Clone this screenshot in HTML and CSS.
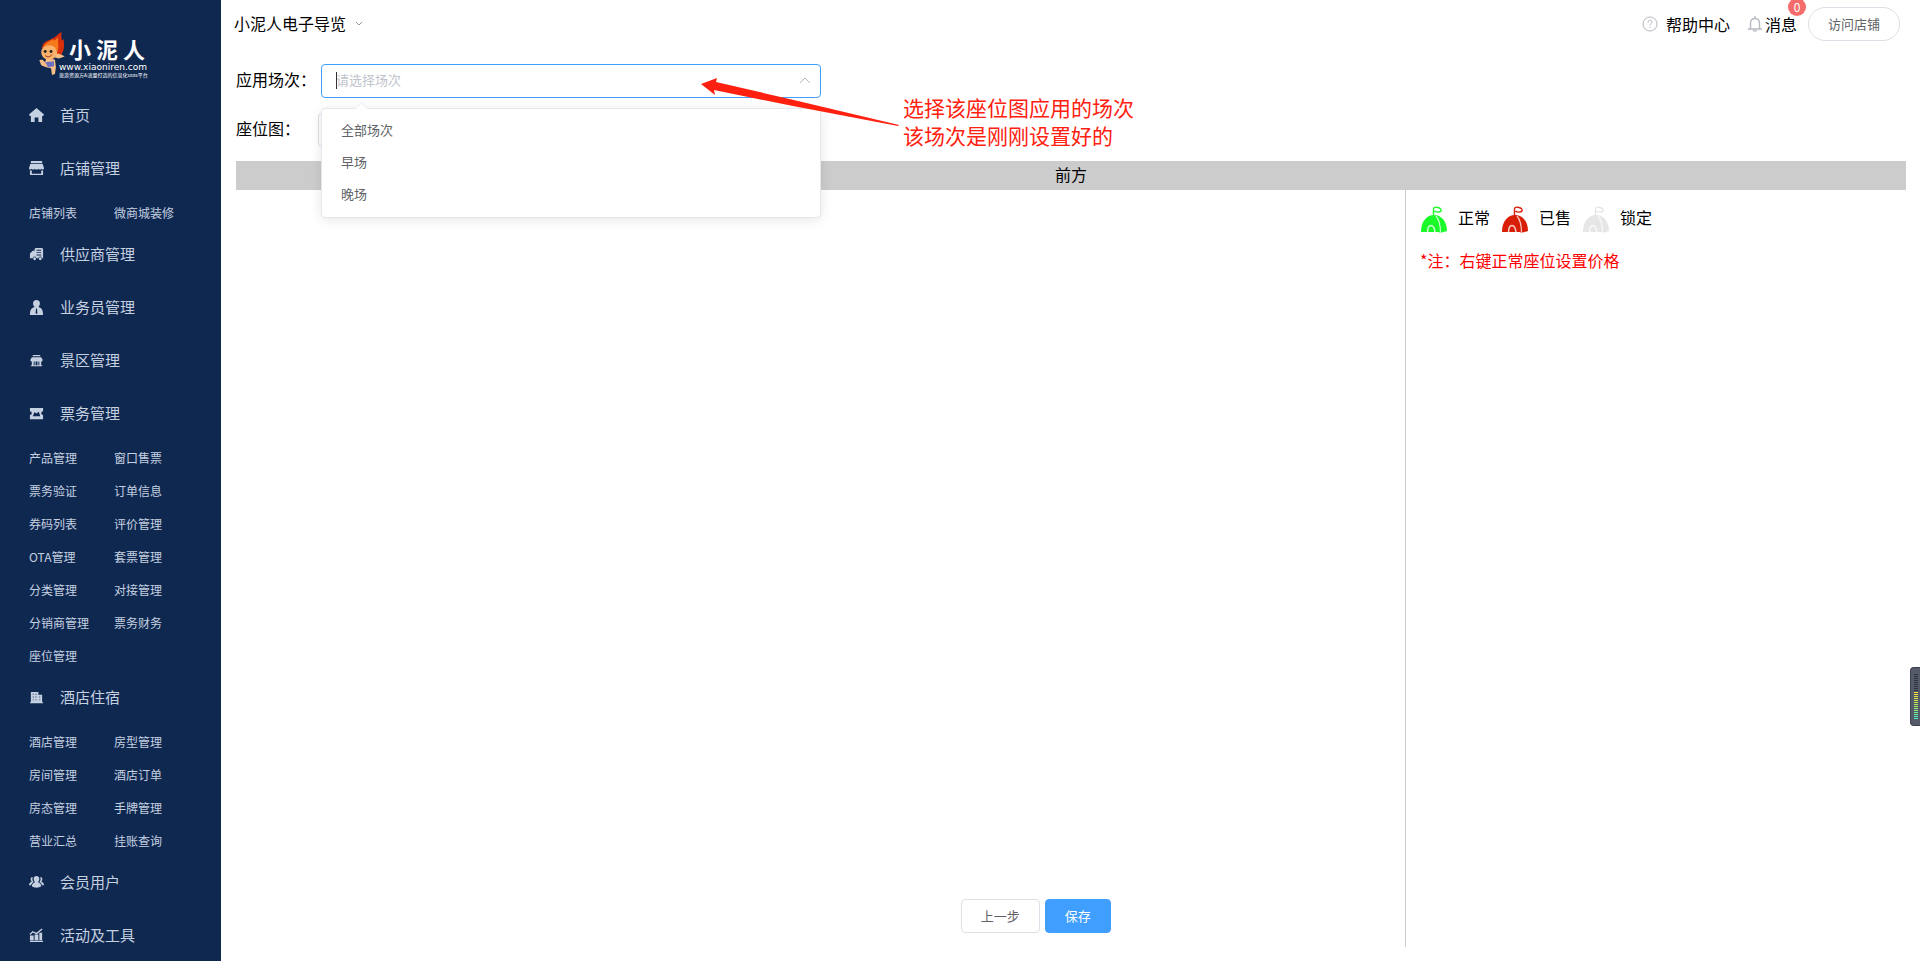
FILE: index.html
```html
<!DOCTYPE html>
<html lang="zh-CN">
<head>
    <meta charset="UTF-8">
    <meta name="viewport" content="width=device-width, initial-scale=1.0">
    <title>小泥人电子导览</title>
    <link rel="stylesheet" href="styles.css">
</head>
<body>
<svg class="defs" width="0" height="0">
    <symbol id="tent" viewBox="0 0 28 28">
        <path d="M1 26C1 15 7 9 14 9c7 0 13 6 13 16l-7 2-1-1z" fill="currentColor"/>
        <path d="M13.500 10V3.500C13 1 16 .8 18 1.500c2 .5 4 2 3 3.500-1 1.500-5 1.500-6.500 0" fill="none" stroke="currentColor" stroke-width="1.400"/>
        <path d="M16 10c3.500 4 4.500 10 4.500 17" fill="none" stroke="#fff" stroke-opacity=".75" stroke-width="1.200"/>
        <path d="M7.500 26.500c0-5 1.500-7 3.500-7s3.500 2 4 7" fill="none" stroke="#fff" stroke-opacity=".8" stroke-width="1.500"/>
    </symbol>
</svg>
<div class="layout">
    <aside class="sidebar">
        <a class="logo" href="#">
            <svg class="mascot" viewBox="0 0 28 45">
                <path d="M4 18C3 10 10 9 14 7c4-2 6-5 10-7-1 4 0 6 0 9 1-1 2-1 2-2 0 5 2 12-4 18z" fill="#d8300c"/>
                <path d="M5 18c0-7 6-7 10-11 0 3 2 2 5-2 0 8 2 12-2 18z" fill="#f47a1c"/>
                <ellipse cx="11" cy="21" rx="8" ry="7.500" fill="#f9b26c"/>
                <path d="M18 22c4 0 7 2 9 3l-6 2-4-1zM8 27l9 1 1 8-1 7-3 1-1-7-5-1-5-2-2-5 3-1 3 3z" fill="#f6bd85"/>
                <path d="M7 31l9-1v5l-6 1z" fill="#6d6fc4"/>
                <circle cx="7" cy="20" r="1.500" fill="#222"/>
                <circle cx="13" cy="20" r="1.500" fill="#222"/>
                <path d="M7 24c2 2 5 2 7-1" fill="none" stroke="#8c2c10"/>
            </svg>
            <span class="logo-text">
                <strong>小泥人</strong>
                <span class="logo-url">www.xiaoniren.com</span>
                <span class="logo-slogan">旅游资源方&amp;流量打造的信息化saas平台</span>
            </span>
        </a>
        <nav>
            <a class="menu-item" href="#">
                <svg viewBox="0 0 16 16"><path d="M8 0l8 7-1 1.500h-1V15h-4v-5H6v5H2V8.500H1L0 7z"/></svg>首页
            </a>
            <a class="menu-item" href="#">
                <svg viewBox="0 0 16 16"><path d="M2 0h12v2H2zM1.500 3h13L16 7.500c0 2-2 2-2.700.7C12.500 9.500 11 9.500 10.300 8.200 9.500 9.500 6.500 9.500 5.700 8.200 5 9.500 3.500 9.500 2.700 8.200 2 9.500 0 9.500 0 7.500zM1 10h2v3.500h10V10h2v5H1z"/></svg>店铺管理
            </a>
            <div class="submenu">
                <a href="#">店铺列表</a><a href="#">微商城装修</a>
            </div>
            <a class="menu-item" href="#">
                <svg viewBox="0 0 16 16"><path fill-rule="evenodd" d="M7 1h7l1 1v10h-1a2 2 0 0 0-4 0H8a2 2 0 0 0-4 0H1V7l3-3h2V2zM8 3v1h5V3zm0 2.500v1h5v-1zM8 8v1h5V8z"/><circle cx="6" cy="12.500" r="1.500"/><circle cx="12" cy="12.500" r="1.500"/></svg>供应商管理
            </a>
            <a class="menu-item" href="#">
                <svg viewBox="0 0 16 16"><path fill-rule="evenodd" d="M8 0c5 0 4 6 2 7.500 4 1 5 4 5 8.500H1c0-4.500 1-7.500 5-8.500C4 6 3 0 8 0zm-.500 9L7 14l1 1 1-1-.500-5z"/></svg>业务员管理
            </a>
            <a class="menu-item" href="#">
                <svg viewBox="0 0 16 16"><path d="M4 2h8v1.500H4zM3 4.500h10L15 8h-1v1H2V8H1zM3 9h2v4h1V9h1v4h2V9h1v4h1V9h2v4h1v1H2v-1h1z"/></svg>景区管理
            </a>
            <a class="menu-item" href="#">
                <svg viewBox="0 0 16 16"><path fill-rule="evenodd" d="M1 2h14v3.500a2 2 0 0 0 0 4V14H1V9.500a2 2 0 0 0 0-4zM4 11h8L10.500 6 8 8 6 6.500z"/></svg>票务管理
            </a>
            <div class="submenu">
                <a href="#">产品管理</a><a href="#">窗口售票</a>
                <a href="#">票务验证</a><a href="#">订单信息</a>
                <a href="#">券码列表</a><a href="#">评价管理</a>
                <a href="#">OTA管理</a><a href="#">套票管理</a>
                <a href="#">分类管理</a><a href="#">对接管理</a>
                <a href="#">分销商管理</a><a href="#">票务财务</a>
                <a href="#">座位管理</a>
            </div>
            <a class="menu-item" href="#">
                <svg viewBox="0 0 16 16"><path fill-rule="evenodd" d="M2 2h8v3h4v8h1v1H1v-1h1zm2 2v1h1V4zm3 0v1h1V4zM4 7v1h1V7zm3 0v1h1V7zm-3 3v1h1v-1zm3 0v1h1v-1zm4-3v1h1V7zm0 3v1h1v-1z"/></svg>酒店住宿
            </a>
            <div class="submenu">
                <a href="#">酒店管理</a><a href="#">房型管理</a>
                <a href="#">房间管理</a><a href="#">酒店订单</a>
                <a href="#">房态管理</a><a href="#">手牌管理</a>
                <a href="#">营业汇总</a><a href="#">挂账查询</a>
            </div>
            <a class="menu-item" href="#">
                <svg viewBox="0 0 16 16"><path d="M8 1c4 0 3.500 5 1.500 6.500C12 9 13 10 13 12c-2 2-8 2-10 0 0-2 1-3 3.500-4.500C4.500 6 4 1 8 1zM4 2C3 4 4 6.500 5 7.500 3 8.500 2.500 10 2 11H0c0-2 1-3 3-4C1 5 1.500 2 4 2zm8 0c1 2 0 4.500-1 5.500 2 1 2.500 2.500 3 3.500h2c0-2-1-3-3-4 2-2 1.500-5-1-5z"/></svg>会员用户
            </a>
            <a class="menu-item" href="#">
                <svg viewBox="0 0 16 16"><path d="M1 8h4v5H1zm5-1h4v6H6zm5-2h3v8h-3zM1 13.500h14V15H1z"/><path d="M1 7l3-3 4 2 6-5" fill="none" stroke="currentColor" stroke-width="1.400"/></svg>活动及工具
            </a>
        </nav>
    </aside>

    <div class="content">
        <header class="topbar">
            <button class="shop-switch" type="button">小泥人电子导览
                <svg width="8" height="8" viewBox="0 0 8 8"><path d="M1 3l3 3 3-3"/></svg>
            </button>
            <div class="top-links">
                <a class="help" href="#">
                    <svg width="16" height="16" viewBox="0 0 16 16"><circle cx="8" cy="8" r="7"/><path d="M6 6.500c0-3 4-3 4-.5 0 1.500-2 1.500-2 3.500M8 11v1"/></svg>
                    帮助中心
                </a>
                <a class="news" href="#">
                    <svg width="14" height="16" viewBox="0 0 14 16"><path d="M0 13h14M2.500 13V7c0-6 9-6 9 0v6M7 2.500V0M5.500 14c0 1.500 3 1.500 3 0" stroke-width="1.400"/></svg>
                    消息
                    <span class="badge">0</span>
                </a>
                <button class="visit" type="button">访问店铺</button>
            </div>
        </header>

        <main class="main">
            <div class="form-row">
                <label for="session">应用场次：</label>
                <div class="select">
                    <input id="session" type="text" placeholder="请选择场次" autocomplete="off">
                    <span class="caret"></span>
                    <svg class="arrow-up" width="12" height="8" viewBox="0 0 12 8"><path d="M1 7l5-5 5 5"/></svg>
                    <ul class="dropdown">
                        <li>全部场次</li>
                        <li>早场</li>
                        <li>晚场</li>
                    </ul>
                    <svg class="pointer" viewBox="0 0 200 50"><path d="M0 6l16-6-1 4 82 19 101 24-1 1L92 28 13 12l1 5z"/></svg>
                    <p class="tip">选择该座位图应用的场次<br>该场次是刚刚设置好的</p>
                </div>
            </div>
            <div class="form-row seat-row">
                <label for="seatmap">座位图：</label>
                <input id="seatmap" type="text">
            </div>
            <div class="front">前方</div>
            <div class="stage">
                <section class="seats">
                    <div class="actions">
                        <button class="btn" type="button">上一步</button>
                        <button class="btn primary" type="button">保存</button>
                    </div>
                </section>
                <section class="legend">
                    <ul class="states">
                        <li><svg class="tent normal"><use href="#tent"/></svg>正常</li>
                        <li><svg class="tent sold"><use href="#tent"/></svg>已售</li>
                        <li><svg class="tent locked"><use href="#tent"/></svg>锁定</li>
                    </ul>
                    <p class="note">*注：右键正常座位设置价格</p>
                </section>
            </div>
        </main>
    </div>
</div>
<div class="meter"><span class="meter-off"></span><span class="meter-on"></span></div>
</body>
</html>
```
FILE: styles.css
```css
* {
    box-sizing: border-box;
}
body {
    margin: 0;
    font-family: "Noto Sans CJK SC", sans-serif;
    font-size: 16px;
    line-height: 24px;
    color: #000;
    background: #fff;
}
a {
    color: inherit;
    text-decoration: none;
}
ul, p {
    margin: 0;
    padding: 0;
    list-style: none;
}
button, input {
    font-family: inherit;
}
.defs {
    position: absolute;
}
.layout {
    display: flex;
    height: 100vh;
}

/* sidebar */
.sidebar {
    flex: 0 0 221px;
    overflow: hidden;
    background: #0f2850;
    color: #c5d0e0;
}
.logo {
    display: flex;
    height: 90px;
    padding: 32px 0 0 38px;
    color: #fff;
}
.mascot {
    flex: none;
    width: 28px;
    height: 44px;
}
.logo-text {
    display: flex;
    flex-direction: column;
    margin-left: -7px;
    padding-top: 2px;
    white-space: nowrap;
}
.logo-text strong {
    padding-left: 10px;
    font-size: 22px;
    font-weight: 700;
    line-height: 28px;
    letter-spacing: 5px;
}
.logo-url {
    font-family: "DejaVu Sans", sans-serif;
    font-size: 9px;
    line-height: 10px;
}
.logo-slogan {
    font-size: 5px;
    line-height: 5px;
}
.menu-item {
    display: flex;
    align-items: center;
    height: 53px;
    padding: 0 0 3px 29px;
    font-size: 15px;
}
.menu-item svg {
    width: 15px;
    height: 15px;
    margin-right: 16px;
    fill: currentColor;
}
.submenu {
    display: grid;
    grid-template-columns: 85px 1fr;
    padding-left: 29px;
    font-size: 12px;
    line-height: 33px;
}

/* top bar */
.content {
    display: flex;
    flex: 1;
    flex-direction: column;
    min-width: 0;
}
.topbar {
    display: flex;
    justify-content: space-between;
    height: 48px;
    padding: 0 20px 0 13px;
}
.topbar svg, .arrow-up {
    fill: none;
    stroke: #b4b8c0;
}
.shop-switch {
    display: flex;
    align-items: center;
    gap: 9px;
    height: 46px;
    padding: 0;
    border: 0;
    background: none;
    color: #000;
    font-size: 16px;
}
.shop-switch svg {
    stroke: #909399;
}
.top-links {
    display: flex;
    align-items: center;
    height: 48px;
}
.help, .news {
    display: flex;
    align-items: center;
}
.help {
    gap: 8px;
    margin-right: 18px;
}
.news {
    position: relative;
    gap: 3px;
    margin-right: 11px;
}
.badge {
    position: absolute;
    top: -14px;
    right: -9px;
    width: 18px;
    height: 18px;
    border-radius: 9px;
    background: #f56c6c;
    color: #fff;
    font-size: 12px;
    line-height: 18px;
    text-align: center;
}
.visit {
    height: 34px;
    padding: 0 19px 2px;
    border: 1px solid #dcdfe6;
    border-radius: 17px;
    background: #fff;
    color: #606266;
    font-size: 13px;
}

/* form */
.main {
    display: flex;
    flex: 1;
    flex-direction: column;
    padding: 16px 14px 14px 15px;
}
.form-row {
    display: flex;
    align-items: center;
    gap: 5px;
    height: 34px;
    margin-bottom: 15px;
}
.form-row label {
    padding-bottom: 4px;
}
.seat-row {
    gap: 18px;
    margin-bottom: 14px;
}
.select {
    position: relative;
    width: 500px;
}
.form-row input {
    display: block;
    width: 500px;
    height: 34px;
    padding: 0 14px 3px;
    border: 1px solid #dcdfe6;
    border-radius: 4px;
    outline: none;
    color: #606266;
    font-size: 13px;
}
.form-row .select input {
    border-color: #409eff;
}
.form-row input::placeholder {
    color: #c0c4cc;
}
.caret {
    position: absolute;
    top: 8px;
    left: 15px;
    width: 1px;
    height: 17px;
    background: #333;
}
.arrow-up {
    position: absolute;
    top: 12px;
    right: 10px;
}
.dropdown {
    position: absolute;
    z-index: 2;
    top: 44px;
    left: 0;
    width: 100%;
    padding: 5px 0 7px;
    border: 1px solid #e4e7ed;
    border-radius: 4px;
    background: #fff;
    box-shadow: 0 2px 12px rgba(0, 0, 0, 0.1);
    color: #606266;
    font-size: 13px;
    line-height: 32px;
}
.dropdown::before {
    content: "";
    position: absolute;
    top: -5px;
    left: 35px;
    width: 8px;
    height: 8px;
    border: 1px solid #ebeef5;
    border-width: 1px 0 0 1px;
    background: #fff;
    transform: rotate(45deg);
}
.dropdown li {
    padding: 0 19px;
}
.pointer {
    position: absolute;
    z-index: 3;
    top: 14px;
    left: 380px;
    width: 200px;
    height: 50px;
    fill: #ff2010;
}
.tip {
    position: absolute;
    z-index: 3;
    top: 29px;
    left: 582px;
    color: #ff2010;
    font-size: 21px;
    line-height: 28px;
    white-space: nowrap;
}

/* seat area */
.front {
    height: 29px;
    background: #ccc;
    line-height: 26px;
    text-align: center;
}
.stage {
    display: flex;
    flex: 1;
}
.seats {
    display: flex;
    width: 70%;
    align-items: flex-end;
}
.actions {
    display: flex;
    gap: 5px;
    margin: 0 0 14px 62%;
}
.btn {
    height: 34px;
    padding: 0 19px 2px;
    border: 1px solid #dcdfe6;
    border-radius: 4px;
    background: #fff;
    color: #606266;
    font-size: 13px;
}
.primary {
    border-color: #409eff;
    background: #409eff;
    color: #fff;
}
.legend {
    width: 30%;
    padding: 15px 14px;
    border-left: 1px solid #ccc;
}
.states {
    display: flex;
    gap: 11px;
    height: 30px;
}
.states li {
    display: flex;
    align-items: flex-start;
}
.tent {
    width: 28px;
    height: 28px;
    margin: 1px 10px 0 0;
}
.normal {
    color: #1afa29;
}
.sold {
    color: #d81e06;
}
.locked {
    color: #e6e6e6;
}
.note {
    margin-top: 13px;
    color: #f00;
}

/* level meter docked to the window edge */
.meter {
    position: fixed;
    top: 667px;
    right: 0;
    width: 10px;
    height: 59px;
    padding: 6px 0 0 3px;
    border: 1px solid #3c414d;
    border-right: 0;
    border-radius: 4px 0 0 4px;
    background: #555a68;
}
.meter span {
    display: block;
    width: 4px;
    -webkit-mask: repeating-linear-gradient(#000 0 1px, transparent 1px 2px);
    mask: repeating-linear-gradient(#000 0 1px, transparent 1px 2px);
}
.meter-off {
    height: 18px;
    background: #2f333d;
}
.meter-on {
    height: 28px;
    background: linear-gradient(#ffe033, #a8ee60, #40f0d0);
}
```
